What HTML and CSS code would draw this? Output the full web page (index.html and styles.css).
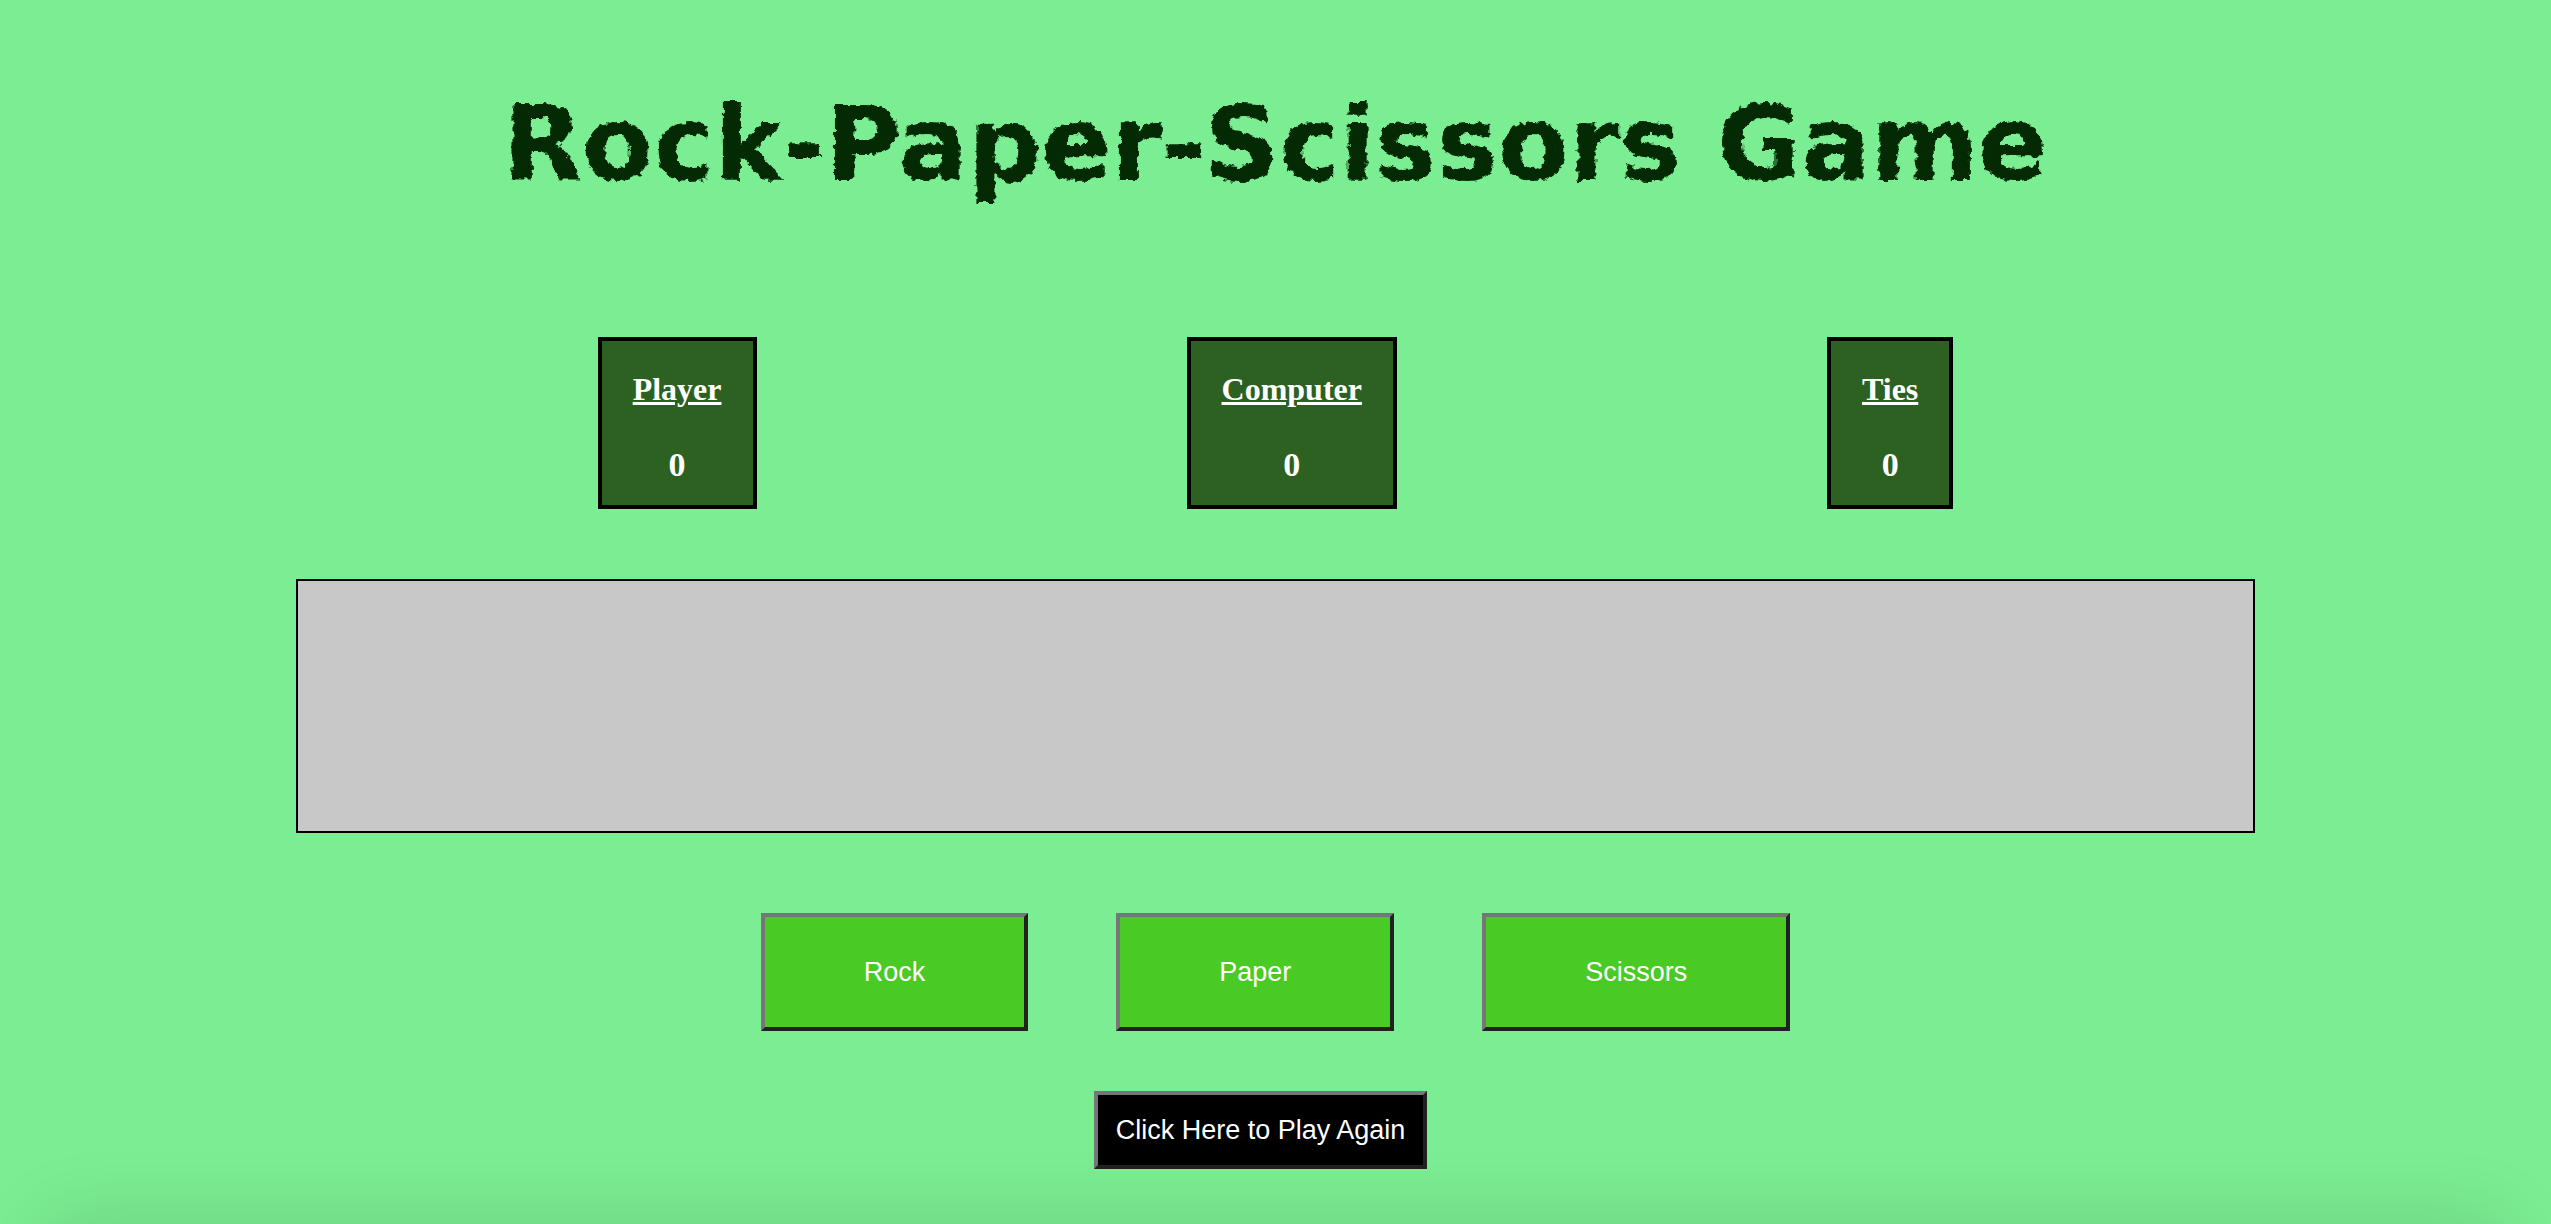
FILE: index.html
```html
<!DOCTYPE html>
<html lang="en">
<head>
<meta charset="utf-8">
<title>Rock-Paper-Scissors Game</title>
<link rel="stylesheet" href="styles.css">
</head>
<body>
<svg class="filters" width="0" height="0" aria-hidden="true">
  <filter id="chalk" x="-2%" y="-10%" width="104%" height="120%" color-interpolation-filters="sRGB">
    <feTurbulence type="fractalNoise" baseFrequency="0.15" numOctaves="2" seed="4" result="noise"/>
    <feDisplacementMap in="SourceGraphic" in2="noise" scale="8" xChannelSelector="R" yChannelSelector="G"/>
  </filter>
</svg>
<main class="game">
  <h1 class="title">Rock-Paper-Scissors Game</h1>
  <section class="scores">
    <div class="score"><h2 class="score-name">Player</h2><p class="score-value">0</p></div>
    <div class="score"><h2 class="score-name">Computer</h2><p class="score-value">0</p></div>
    <div class="score"><h2 class="score-name">Ties</h2><p class="score-value">0</p></div>
  </section>
  <section class="results"></section>
  <div class="choices">
    <button class="btn choice" type="button">Rock</button>
    <button class="btn choice" type="button">Paper</button>
    <button class="btn choice" type="button">Scissors</button>
  </div>
  <button class="btn again" type="button">Click Here to Play Again</button>
</main>
</body>
</html>
```

FILE: styles.css
```css
* { box-sizing: border-box; }

body {
  margin: 0;
  min-height: 100vh;
  background: #7bed92;
  font-family: "Liberation Serif", "Times New Roman", serif;
}

/* soft shade along the lower edge of the window */
body::after {
  content: "";
  position: fixed;
  top: 100%;
  left: 48px;
  right: 48px;
  height: 100px;
  box-shadow: 0 0 80px rgba(0, 0, 0, 0.13);
}

.filters { position: absolute; }

.game {
  display: flex;
  flex-direction: column;
  align-items: center;
  padding-top: 80px;
}

.title {
  margin: 0;
  color: #032a03;
  font-family: "DejaVu Sans", sans-serif;
  font-size: 103px;
  font-weight: 700;
  line-height: 128px;
  text-align: center;
  filter: url(#chalk);
}

.scores {
  display: flex;
  justify-content: space-around;
  width: 70%;
  margin-top: 129px;
}

.score {
  padding: 30px 31px 22px;
  border: 4px solid #000;
  background: #2c6122;
  color: #fff;
  text-align: center;
}

.score-name,
.score-value {
  margin: 0;
  font-size: 32px;
  font-weight: 700;
  line-height: 36px;
}

.score-name { text-decoration: underline; }

.score-value {
  margin-top: 40px;
  font-size: 34px;
}

.results {
  width: 76.8%;
  min-height: 254px;
  margin-top: 70px;
  border: 2px solid #000;
  background: #c8c8c8;
}

.choices {
  display: flex;
  gap: 88px;
  margin-top: 80px;
}

.btn {
  border: 4px solid;
  border-color: #767676 #212121 #212121 #767676;
  color: #fff;
  font-family: "Liberation Sans", Arial, sans-serif;
  font-size: 27px;
  line-height: 30px;
}

.choice {
  padding: 40px 99px;
  background: #49ca24;
}

.again {
  margin: 60px 30px 40px 0;
  padding: 20px 18px;
  background: #000;
}
```
